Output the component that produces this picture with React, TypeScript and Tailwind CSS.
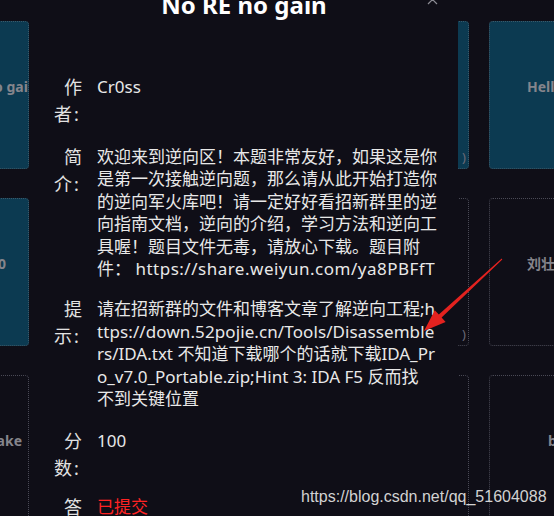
import React from "react";

const teal = "bg-[#0c3a51] border border-dotted border-[#3c5868]";
const dark = "border border-dotted border-[#4a4a56]";

function Card({
  cls,
  children,
  align = "center",
}: {
  cls: string;
  children?: React.ReactNode;
  align?: "start" | "end" | "center";
}) {
  const j =
    align === "start" ? "justify-start" : align === "end" ? "justify-end" : "justify-center";
  return (
    <div
      className={`relative w-[200px] h-[148px] shrink-0 rounded-[4px] overflow-hidden flex ${j} items-start ${cls}`}
    >
      {children}
    </div>
  );
}

function Title({ text, className }: { text: string; className: string }) {
  return (
    <div
      className={`mt-[56px] text-[14px] leading-[18px] font-bold text-[#85858c] whitespace-nowrap ${className}`}
    >
      {text}
    </div>
  );
}

function Paren() {
  return (
    <div className="absolute right-[2px] bottom-[4px] text-[13px] leading-[14px] text-[#6b6b78]">
      )
    </div>
  );
}

function Label({ a, b }: { a: string; b: string }) {
  return (
    <div className="w-[40px] shrink-0 flex flex-col items-end text-[18px] leading-[27px] text-[#e2e2e2]">
      <div>{a}</div>
      <div className="flex">
        <span>{b}</span>
        <span className="inline-block w-[10px] text-left pl-[2px]">:</span>
      </div>
    </div>
  );
}

function Row({
  mt,
  a,
  b,
  lines,
  red,
}: {
  mt: string;
  a: string;
  b: string;
  lines: React.ReactNode[];
  red?: boolean;
}) {
  return (
    <div className={`flex items-start ml-[12px] ${mt}`}>
      <Label a={a} b={b} />
      <div
        className={`ml-[15px] pt-[2px] text-[17px] leading-[22.4px] whitespace-nowrap ${
          red ? "text-[#ff2323]" : "text-[#e8e8e8]"
        }`}
      >
        {lines.map((l, i) => (
          <div key={i}>{l}</div>
        ))}
      </div>
    </div>
  );
}

export default function App() {
  return (
    <div
      className="relative w-[554px] h-[516px] overflow-hidden bg-[#0f0e17]"
      style={{ fontFamily: '"Noto Sans", "Noto Sans CJK SC", sans-serif' }}
    >
      {/* background cards */}
      <div className="flex flex-col gap-[29px] pt-[21px] ml-[-171px]">
        <div className="flex gap-[20px]">
          <Card cls={teal} align="end">
            <Title text="No RE no gain" className="mr-[-9px]" />
          </Card>
          <Card cls={teal} />
          <Card cls={teal}>
            <Paren />
          </Card>
          <Card cls={teal} align="start">
            <Title text="Hello_Reverse" className="pl-[37px]" />
          </Card>
        </div>
        <div className="flex gap-[20px]">
          <Card cls={teal} align="end">
            <Title text="Easy_RE_2020" className="mr-[22px]" />
          </Card>
          <Card cls={dark} />
          <Card cls={dark}>
            <Paren />
          </Card>
          <Card cls={dark} align="start">
            <Title text="刘壮的逆向题" className="pl-[37px]" />
          </Card>
        </div>
        <div className="flex gap-[20px]">
          <Card cls={dark} align="end">
            <Title text="Snake" className="mr-[6px]" />
          </Card>
          <Card cls={dark} />
          <Card cls={dark} />
          <Card cls={dark} align="start">
            <Title text="babyre" className="pl-[58px]" />
          </Card>
        </div>
      </div>

      {/* modal */}
      <div className="absolute left-[30px] top-0 w-[428px] h-[516px] bg-[#0f0e17]">
        <div className="mt-[-10px] h-[30px] text-center text-[24px] leading-[30px] font-bold text-white">
          No RE no gain
        </div>
        <svg
          className="absolute left-[397px] top-[-6px]"
          width="11"
          height="11"
          viewBox="0 0 11 11"
        >
          <path d="M1 1 L10 10 M10 1 L1 10" stroke="#8c8c94" strokeWidth="1.2" />
        </svg>

        <Row mt="mt-[54px]" a="作" b="者" lines={["Cr0ss"]} />
        <Row
          mt="mt-[16px]"
          a="简"
          b="介"
          lines={[
            "欢迎来到逆向区！本题非常友好，如果这是你",
            "是第一次接触逆向题，那么请从此开始打造你",
            "的逆向军火库吧！请一定好好看招新群里的逆",
            "向指南文档，逆向的介绍，学习方法和逆向工",
            "具喔！题目文件无毒，请放心下载。题目附",
            <>
              件： <span className="tracking-[0.5px]">https://share.weiyun.com/ya8PBFfT</span>
            </>,
          ]}
        />
        <Row
          mt="mt-[16px]"
          a="提"
          b="示"
          lines={[
            "请在招新群的文件和博客文章了解逆向工程;h",
            <span className="tracking-[0.1px]">ttps://down.52pojie.cn/Tools/Disassemble</span>,
            "rs/IDA.txt 不知道下载哪个的话就下载IDA_Pr",
            "o_v7.0_Portable.zip;Hint 3: IDA F5 反而找",
            "不到关键位置",
          ]}
        />
        <Row mt="mt-[18px]" a="分" b="数" lines={["100"]} />
        <Row mt="mt-[12px]" a="答" b="题" lines={["已提交"]} red />
      </div>

      {/* red arrow */}
      <svg className="absolute left-0 top-0" width="554" height="516" viewBox="0 0 554 516">
        <polygon
          points="502.3,259.4 441.6,317.6 445.6,322 424,331 434.8,310.2 438.8,314.6 501.7,258.6"
          fill="#e3221f"
        />
      </svg>

      {/* watermark */}
      <div
        className="absolute left-[301px] top-[487px] text-[16px] leading-[20px] text-[#d2d2d2] whitespace-nowrap"
        style={{ fontFamily: '"Liberation Sans", Arial, sans-serif' }}
      >
        https://blog.csdn.net/qq_51604088
      </div>
    </div>
  );
}
